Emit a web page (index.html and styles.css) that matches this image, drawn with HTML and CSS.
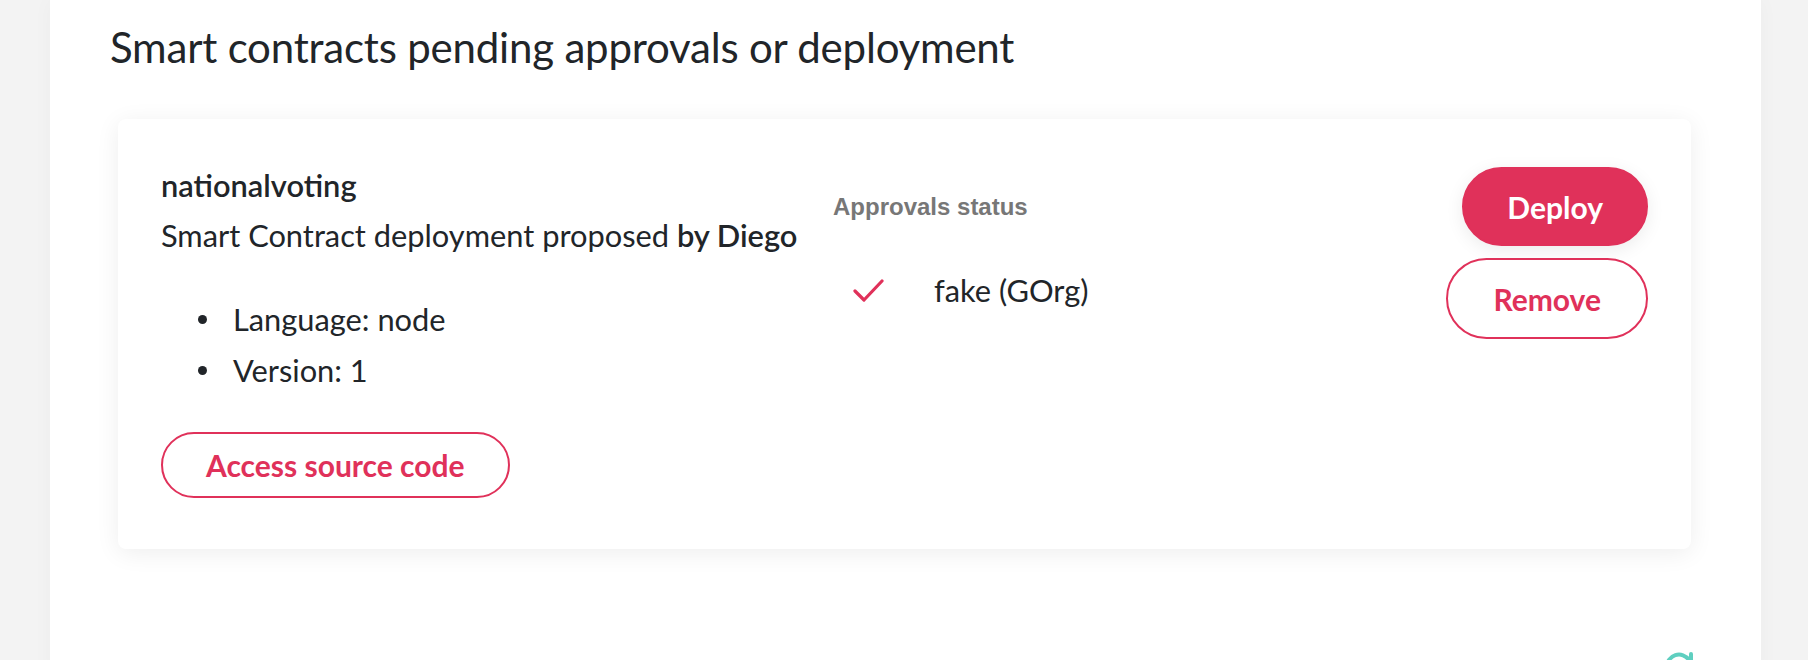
FILE: index.html
```html
<!DOCTYPE html>
<html lang="en">
<head>
<meta charset="utf-8">
<title>Smart contracts pending approvals</title>
<link rel="stylesheet" href="styles.css">
</head>
<body>
<main class="panel">
  <h2 class="title">Smart contracts pending approvals or deployment</h2>
  <section class="card">
    <div class="info">
      <div class="name">nationalvoting</div>
      <div class="desc">Smart Contract deployment proposed <strong>by Diego</strong></div>
      <ul class="meta">
        <li>Language: node</li>
        <li>Version: 1</li>
      </ul>
      <button class="btn btn-outline btn-md">Access source code</button>
    </div>
    <div class="approvals">
      <div class="approvals-label">Approvals status</div>
      <div class="approval-row">
        <span class="check">
          <svg width="32" height="26" viewBox="0 0 32 26"><path d="M2 13 L11 22 L29 3" fill="none" stroke="#e0315a" stroke-width="3.2" stroke-linecap="round" stroke-linejoin="round"/></svg>
        </span>
        <span class="org">fake (GOrg)</span>
      </div>
    </div>
    <div class="actions">
      <button class="btn btn-solid btn-lg">Deploy</button>
      <button class="btn btn-outline btn-lg btn-remove">Remove</button>
    </div>
  </section>
  <div class="footer">
    <svg class="sync" width="30" height="30" viewBox="0 0 30 30"><path d="M3 15 A12 12 0 0 1 25 8" fill="none" stroke="#5fcfc0" stroke-width="4" stroke-linecap="round"/><path d="M27 2 L27 11 L18 11" fill="none" stroke="#5fcfc0" stroke-width="4" stroke-linecap="round" stroke-linejoin="round"/></svg>
  </div>
</main>
</body>
</html>
```

FILE: styles.css
```css
* { box-sizing: border-box; }
html, body { margin: 0; padding: 0; }
body {
  background: #f3f3f3;
  font-family: Lato, "Noto Sans", sans-serif;
  color: #212529;
  height: 660px;
  overflow: hidden;
}
.panel {
  margin: 0 47px 0 50px;
  background: #fff;
  min-height: 660px;
  padding: 0 62px 0 60px;
  box-shadow: 0 0 20px rgba(0, 0, 0, 0.03);
}
.title {
  margin: 0;
  padding-top: 21px;
  font-size: 42px;
  letter-spacing: -0.2px;
  line-height: 53px;
  font-weight: 400;
  color: #212529;
}
.card {
  margin: 45px 8px 0;
  padding: 42px 43px 51px;
  background: #fff;
  border-radius: 8px;
  box-shadow: 0 4px 24px rgba(0, 0, 0, 0.07);
  display: grid;
  grid-template-columns: 672px 1fr auto;
  font-size: 30.8px;
  line-height: 50px;
}
.name { font-weight: 600; }
.desc strong { font-weight: 600; }
.meta {
  margin: 33px 0 36px;
  padding-left: 37px;
  list-style: none;
}
.meta li {
  line-height: 51px;
  display: flex;
  align-items: center;
}
.meta li::before {
  content: "";
  width: 9px;
  height: 9px;
  border-radius: 50%;
  background: #212529;
  margin-right: 26px;
}
.btn {
  font-family: Lato, "Noto Sans", sans-serif;
  font-weight: 700;
  border-radius: 999px;
  border: 2px solid #e0315a;
  cursor: pointer;
  display: inline-flex;
  align-items: center;
  justify-content: center;
}
.btn-md {
  height: 66px;
  padding: 0 43px;
  font-size: 30px;
}
.btn-lg {
  height: 79px;
  padding: 0 43px;
  font-size: 30px;
}
.btn-outline { background: #fff; color: #e0315a; }
.btn-solid {
  background: #e0315a;
  color: #fff;
  box-shadow: 0 4px 18px rgba(0, 0, 0, 0.08);
}
.actions {
  display: flex;
  flex-direction: column;
  align-items: flex-end;
  gap: 12px;
  padding-top: 6px;
}
.btn-remove { height: 81px; padding: 0 45px; }
.approvals-label {
  font-family: "Liberation Sans", Arial, sans-serif;
  font-weight: 700;
  font-size: 24px;
  color: #777;
  line-height: 34px;
  margin-top: 29px;
}
.approval-row {
  display: flex;
  align-items: center;
  margin-top: 42px;
  padding-left: 20px;
}
.check { width: 81px; display: flex; }
.footer {
  display: flex;
  justify-content: flex-end;
  margin-top: 103px;
  padding-right: 5px;
}
```
